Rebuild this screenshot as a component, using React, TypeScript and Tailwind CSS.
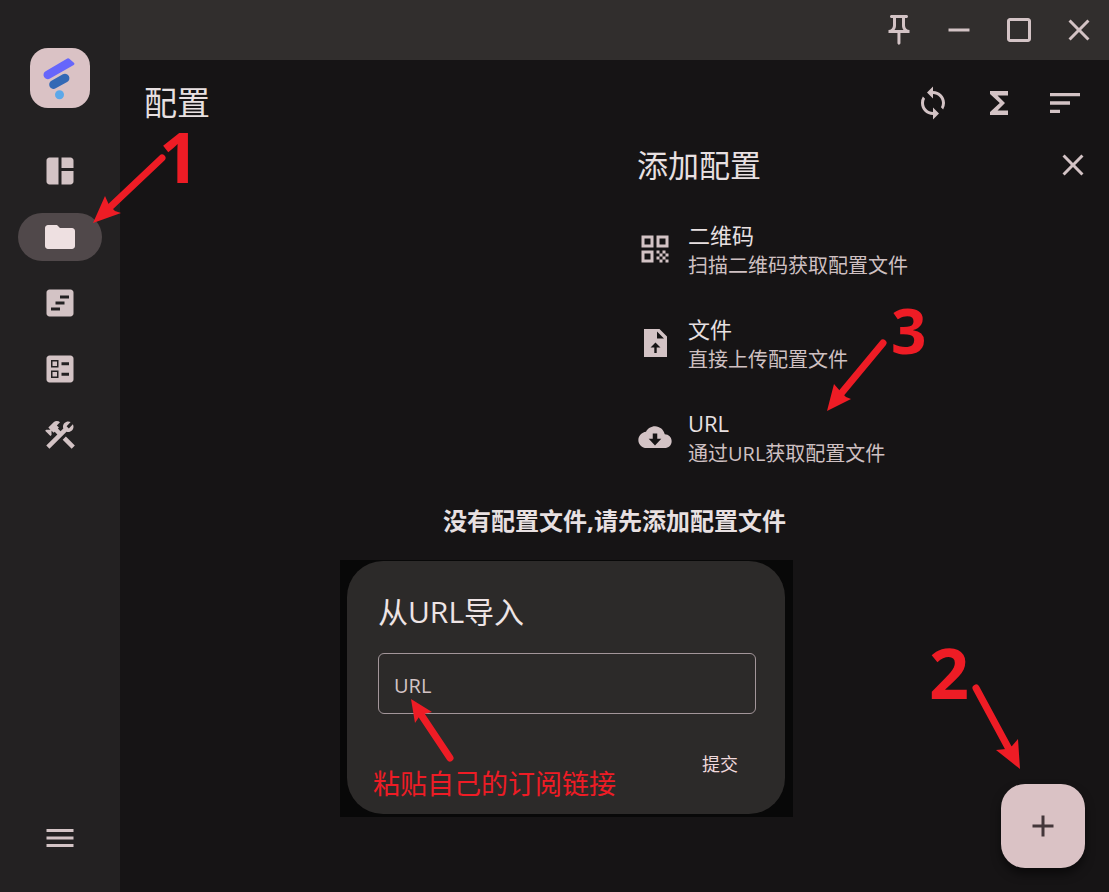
import type { ReactNode } from 'react'
import {
  MdSpaceDashboard,
  MdFolder,
  MdViewTimeline,
  MdBallot,
  MdConstruction,
  MdMenu,
  MdOutlinePushPin,
  MdRemove,
  MdCropSquare,
  MdClose,
  MdSync,
  MdFunctions,
  MdSort,
  MdQrCode,
  MdAdd,
} from 'react-icons/md'

const navItems = [
  { label: '仪表盘', icon: MdSpaceDashboard },
  { label: '配置', icon: MdFolder, active: true },
  { label: '请求', icon: MdViewTimeline },
  { label: '连接', icon: MdBallot },
  { label: '工具', icon: MdConstruction },
]

const arrows = [
  { tail: [162, 158], neck: [107, 210], head: '93,223 105,196 109,205 115,211 121,213' },
  { tail: [883, 343], neck: [839, 396], head: '827,411 834,384 840,391 846,397 851,399' },
  { tail: [976, 688], neck: [1010, 751], head: '1020,769 996,750 1006,749 1012,746 1018,739' },
  { tail: [450, 758], neck: [420, 713], head: '411,699 432,712 424,714 419,717 415,723' },
]

function Logo() {
  return (
    <div className="w-[60px] h-[60px] rounded-[18px] bg-[#dac2c5]">
      <svg viewBox="0 0 60 60" className="w-full h-full">
        <path d="M37.3 10.5L15.6 23.2a4.3 4.3 0 0 0 4.4 7.4L43.7 17a1.3 1.3 0 0 0 .2-2.2l-4.600-4.100a1.800 1.800 0 0 0-2-.2z" fill="#6666fb" />
        <path d="M23.600 36.500L35 30.200" stroke="#3369b5" strokeWidth="8.8" strokeLinecap="round" />
        <circle cx="29.5" cy="46.7" r="4.5" fill="#5ca8e9" />
      </svg>
    </div>
  )
}

function UploadFileIcon() {
  return (
    <svg viewBox="0 0 36 36" className="w-9 h-9" fill="currentColor">
      <path fillRule="evenodd" d="M7 4h15.500L30 11.500V32H7zM20 6.500v7h7zM18.500 17.500L13.500 22.500h3.800V28h2.400v-5.500h3.800z" />
    </svg>
  )
}

function CloudIcon() {
  return (
    <svg viewBox="0 0 24 24" className="w-9 h-9" fill="currentColor">
      <path
        fillRule="evenodd"
        d="M18.500 10.200C17.900 7.200 15.200 4.800 12 4.800c-2.600 0-4.900 1.500-6 3.700C3.200 8.800.9 11.200.9 14c0 3 2.500 5.400 5.500 5.400h12c2.600 0 4.700-2 4.700-4.600 0-2.500-2-4.500-4.600-4.600zM10.500 9.600h3v3.600h2.700L12 17.600l-4.200-4.400h2.700z"
      />
    </svg>
  )
}

function Option({ icon, title, desc }: { icon: ReactNode; title: string; desc: string }) {
  return (
    <button className="w-full h-[94px] flex items-center gap-[15px] text-left hover:bg-white/5">
      <span className="w-9 h-9 mb-[3px] shrink-0 text-[#d3c3c5]">{icon}</span>
      <span className="flex flex-col">
        <span className="text-[22px] leading-[32px] text-[#e8e0e1]">{title}</span>
        <span className="text-[20px] leading-[30px] text-[#cfc0c2]">{desc}</span>
      </span>
    </button>
  )
}

function Sidebar() {
  return (
    <aside className="w-[120px] shrink-0 bg-[#232122] flex flex-col items-center pt-12 pb-[30px]">
      <Logo />
      <nav className="mt-[39px] flex flex-col gap-[18px]">
        {navItems.map(({ label, icon: Icon, active }) => (
          <button
            key={label}
            aria-label={label}
            className={`w-[84px] h-12 rounded-full flex items-center justify-center ${
              active ? 'bg-[#50484a] text-[#eee0e1]' : 'text-[#d3c3c5]'
            }`}
          >
            <Icon className="w-9 h-9" />
          </button>
        ))}
      </nav>
      <button aria-label="菜单" className="mt-auto w-[84px] h-12 flex items-center justify-center text-[#d3c3c5]">
        <MdMenu className="w-9 h-9" />
      </button>
    </aside>
  )
}

function TitleBar() {
  const actions = [
    { label: '置顶', icon: MdOutlinePushPin },
    { label: '最小化', icon: MdRemove },
    { label: '最大化', icon: MdCropSquare },
    { label: '关闭', icon: MdClose },
  ]
  return (
    <header className="h-[60px] bg-[#312e2d] flex justify-end">
      {actions.map(({ label, icon: Icon }) => (
        <button key={label} aria-label={label} className="w-[60px] h-full flex items-center justify-center text-[#d3c3c5]">
          <Icon className="w-9 h-9" />
        </button>
      ))}
    </header>
  )
}

function ImportDialog() {
  return (
    <form
      onSubmit={(e) => e.preventDefault()}
      className="mt-6 ml-[220px] w-[453px] bg-[#080808] pt-px pb-[3px] pl-[7px] pr-2"
    >
      <div className="rounded-[36px] bg-[#2c2a29] pl-[31px] pr-[29px] pt-[30px] pb-8">
        <h3 className="text-[30px] leading-[42px] text-[#eee4e5]">从URL导入</h3>
        <input
          type="text"
          aria-label="URL"
          placeholder="URL"
          className="mt-5 block w-full h-[61px] px-[15px] pt-1 rounded-md border border-[#a3969a] bg-transparent text-[20px] text-[#eee4e5] placeholder:text-[#d3c3c5] outline-none"
        />
        <div className="mt-8 flex justify-end">
          <button type="submit" className="h-9 px-[18px] text-[18px] text-[#f0d9dc]">
            提交
          </button>
        </div>
      </div>
    </form>
  )
}

function Annotations() {
  return (
    <div className="absolute inset-0 pointer-events-none overflow-hidden text-[#ee1c25]">
      <svg className="absolute inset-0 w-full h-full" fill="currentColor" stroke="currentColor">
        {arrows.map(({ tail, neck, head }) => (
          <g key={head}>
            <line x1={tail[0]} y1={tail[1]} x2={neck[0]} y2={neck[1]} strokeWidth="7" strokeLinecap="round" />
            <polygon points={head} stroke="none" />
          </g>
        ))}
      </svg>
      <span className="absolute left-[159px] top-[130px] text-[70px] leading-[52px] font-bold">1</span>
      <span className="absolute left-[929px] top-[646px] text-[70px] leading-[52px] font-bold">2</span>
      <span className="absolute left-[891px] top-[304px] text-[62px] leading-[52px] font-bold">3</span>
      <span className="absolute left-[373px] top-[764px] text-[27px] leading-[40px] whitespace-nowrap">粘贴自己的订阅链接</span>
    </div>
  )
}

export default function App() {
  return (
    <div className="relative min-h-screen flex bg-[#161415] font-['Open_Sans','Noto_Sans_CJK_SC',sans-serif]">
      <Sidebar />
      <div className="flex-1 min-w-0 flex flex-col">
        <TitleBar />
        <main className="flex-1 flex flex-col">
          <div className="h-[85px] pl-6 pr-[11px] flex items-center">
            <h1 className="flex-1 text-[33px] leading-[40px] text-[#e8e0e1]">配置</h1>
            <button aria-label="同步" className="w-[66px] h-12 flex items-center justify-center text-[#d3c3c5]">
              <MdSync className="w-9 h-9" />
            </button>
            <button aria-label="脚本" className="w-[66px] h-12 flex items-center justify-center text-[#d3c3c5]">
              <MdFunctions className="w-9 h-9" />
            </button>
            <button aria-label="排序" className="w-[66px] h-12 flex items-center justify-center text-[#d3c3c5]">
              <MdSort className="w-10 h-10" />
            </button>
          </div>

          <section className="self-end w-[472px]">
            <div className="h-[40px] mb-[18px] pr-[18px] flex items-center justify-between">
              <h2 className="text-[31px] leading-[40px] text-[#e8e0e1]">添加配置</h2>
              <button aria-label="关闭面板" className="w-9 h-9 text-[#d3c3c5]">
                <MdClose className="w-9 h-9" />
              </button>
            </div>
            <Option icon={<MdQrCode className="w-9 h-9" />} title="二维码" desc="扫描二维码获取配置文件" />
            <Option icon={<UploadFileIcon />} title="文件" desc="直接上传配置文件" />
            <Option icon={<CloudIcon />} title="URL" desc="通过URL获取配置文件" />
          </section>

          <p className="mt-[21px] text-center text-[24px] leading-[30px] font-bold text-[#e8e0e1]">
            没有配置文件,请先添加配置文件
          </p>

          <ImportDialog />
        </main>
      </div>

      <button
        aria-label="添加"
        className="absolute right-6 bottom-6 w-[84px] h-[84px] rounded-3xl bg-[#dac2c5] text-[#43363a] shadow-[0_6px_10px_rgba(0,0,0,0.5)] flex items-center justify-center"
      >
        <MdAdd className="w-9 h-9" />
      </button>

      <Annotations />
    </div>
  )
}
